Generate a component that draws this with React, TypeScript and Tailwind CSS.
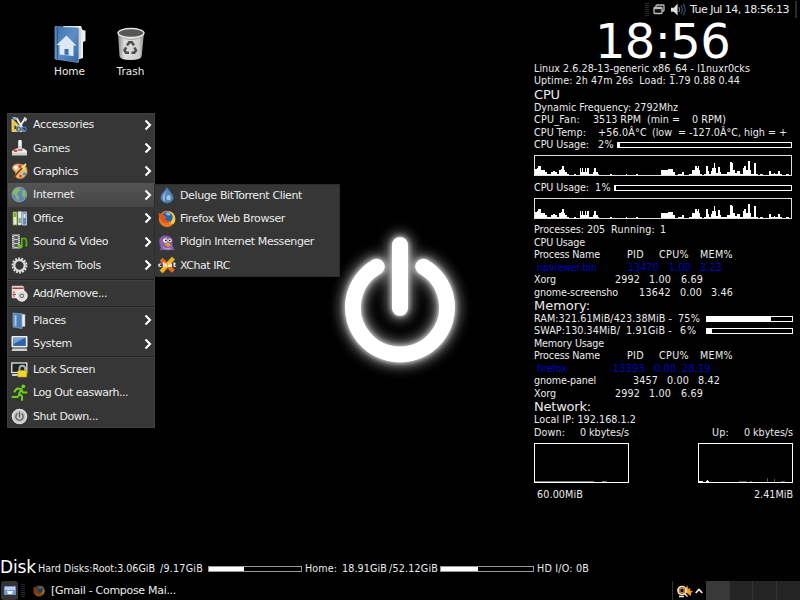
import { useLayoutEffect, useRef, useState, type ReactNode } from "react";

/* Text that spreads its letters evenly to fill the width given by its class. */
function Fit({ c, children }: { c: string; children: string }) {
  const outer = useRef<HTMLSpanElement>(null);
  const inner = useRef<HTMLSpanElement>(null);
  const [gap, setGap] = useState(0);
  useLayoutEffect(() => {
    if (!outer.current || !inner.current) return;
    const free = outer.current.getBoundingClientRect().width - inner.current.getBoundingClientRect().width;
    setGap(free / children.length);
  }, [children]);
  return (
    <span ref={outer} className={`block shrink-0 whitespace-pre ${c}`}>
      <span ref={inner} className="inline-block" style={{ letterSpacing: gap }}>
        {children}
      </span>
    </span>
  );
}

function Row({ children, c = "" }: { children: ReactNode; c?: string }) {
  return <div className={`flex h-[12.5px] items-center ${c}`}>{children}</div>;
}

function Title({ children, c }: { children: string; c: string }) {
  return (
    <div className="flex h-[13.75px] items-center text-[13px]">
      <Fit c={c}>{children}</Fit>
    </div>
  );
}

function Bar({ c, fill }: { c: string; fill: string }) {
  return (
    <div className={`h-[6px] shrink-0 border ${c}`}>
      <div className={`h-full bg-white ${fill}`} />
    </div>
  );
}

/* CPU load history: [x, height] in thirds of a pixel. */
const load: [number, number][] = [
  [28, 18], [36, 22], [41, 28], [47, 28], [50, 16], [54, 14], [62, 10], [68, 4], [78, 10], [84, 12], [90, 8], [96, 3],
  [104, 16], [109, 18], [113, 26], [117, 16], [122, 8], [127, 3], [132, 1], [147, 3], [153, 1], [165, 20], [169, 8], [172, 20],
  [175, 10], [181, 20], [184, 8], [188, 20], [193, 4], [204, 9], [209, 20], [214, 10], [219, 4], [222, 1], [255, 3], [262, 0],
  [304, 3], [307, 0], [335, 2], [340, 0], [385, 1], [410, 15], [430, 18], [441, 17], [446, 8], [450, 1], [460, 3], [472, 9], [477, 1],
  [492, 3], [503, 14], [510, 26], [516, 22], [520, 26], [523, 14], [527, 4], [531, 1], [537, 4], [545, 26], [549, 12], [552, 4],
  [558, 12], [562, 22], [567, 36], [570, 22], [574, 6], [581, 24], [585, 8], [589, 2], [601, 4], [608, 8], [616, 40], [622, 36],
  [626, 14], [630, 6], [636, 12], [645, 4], [654, 20], [659, 26], [663, 14], [671, 42], [675, 16], [679, 2], [689, 36], [694, 4],
  [699, 1], [707, 4], [715, 1], [733, 12], [738, 3], [747, 6], [752, 3], [759, 12], [765, 3], [772, 1], [785, 4], [792, 1],
];

function LoadGraph() {
  const d = load.map(([x, h]) => `H${Math.round((x - 28) / 3)}V${20 - Math.round(h / 3)}`).join("");
  return (
    <div className="h-[30px] pt-[4px]">
      <svg className="block h-[21px] w-[258px]" viewBox="0 0 258 21">
        <path d={`M0 21${d}H258V21z`} fill="#fff" />
        <rect x=".5" y=".5" width="257" height="20" fill="none" stroke="#e0e0e0" />
      </svg>
    </div>
  );
}

function Conky() {
  return (
    <section className="w-[266px] shrink-0 text-[9.6px] leading-none text-[#ebebeb]">
      <div className="flex h-[43.5px] items-center pl-[61px] text-[48px] leading-[40px] text-white">
        <Fit c="w-[135px]">18:56</Fit>
      </div>
      <Row><Fit c="w-[216px]">Linux 2.6.28-13-generic x86_64 - l1nuxr0cks</Fit></Row>
      <Row><Fit c="w-[206px]">Uptime: 2h 47m 26s  Load: 1.79 0.88 0.44</Fit></Row>
      <Title c="w-[26px]">CPU</Title>
      <Row><Fit c="w-[144px]">Dynamic Frequency: 2792Mhz</Fit></Row>
      <Row>
        <Fit c="w-[46px]">CPU_Fan:</Fit><Fit c="ml-[13px] w-[48px]">3513 RPM</Fit>
        <Fit c="ml-[6px] w-[33px]">(min =</Fit><Fit c="ml-[12px] w-[34px]">0 RPM)</Fit>
      </Row>
      <Row>
        <Fit c="w-[52px]">CPU Temp:</Fit><Fit c="ml-[12px] w-[49px]">+56.0Â°C</Fit>
        <Fit c="ml-[5px] w-[20px]">(low</Fit><Fit c="ml-[6px] w-[109px]">= -127.0Â°C, high = +</Fit>
      </Row>
      <Row><Fit c="w-[55px]">CPU Usage:</Fit><Fit c="ml-[9px] w-[16px]">2%</Fit><Bar c="ml-[3px] w-[175px] border-white" fill="w-[2px]" /></Row>
      <LoadGraph />
      <Row><Fit c="w-[55px]">CPU Usage:</Fit><Fit c="ml-[6px] w-[16px]">1%</Fit><Bar c="ml-[3px] w-[178px] border-white" fill="w-[1px]" /></Row>
      <LoadGraph />
      <Row><Fit c="w-[71px]">Processes: 205</Fit><Fit c="ml-[6px] w-[44px]">Running:</Fit><Fit c="ml-[5px] w-[6px]">1</Fit></Row>
      <Row><Fit c="w-[51px]">CPU Usage</Fit></Row>
      <Heads />
      <Row c="text-[#0000c8]">
        <Fit c="ml-[3px] w-[60px]">npviewer.bin</Fit><Fit c="ml-[31px] w-[31px]">13470</Fit>
        <Fit c="ml-[10px] w-[22px]">1.00</Fit><Fit c="ml-[9px] w-[22px]">3.23</Fit>
      </Row>
      <Xorg />
      <Row>
        <Fit c="w-[84px]">gnome-screensho</Fit><Fit c="ml-[21px] w-[32px]">13642</Fit>
        <Fit c="ml-[9px] w-[22px]">0.00</Fit><Fit c="ml-[9px] w-[22px]">3.46</Fit>
      </Row>
      <Title c="w-[56px]">Memory:</Title>
      <Row>
        <Fit c="w-[138px]">RAM:321.61MiB/423.38MiB -</Fit><Fit c="ml-[6px] w-[22px]">75%</Fit>
        <Bar c="ml-[6px] w-[87px] border-white" fill="w-[64px]" />
      </Row>
      <Row>
        <Fit c="w-[86px]">SWAP:130.34MiB/</Fit><Fit c="ml-[6px] w-[46px]">1.91GiB -</Fit>
        <Fit c="ml-[8px] w-[17px]">6%</Fit><Bar c="ml-[9px] w-[87px] border-white" fill="w-[5px]" />
      </Row>
      <Row><Fit c="w-[70px]">Memory Usage</Fit></Row>
      <Heads />
      <Row c="text-[#0000c8]">
        <Fit c="ml-[3px] w-[30px]">firefox</Fit><Fit c="ml-[46px] w-[32px]">13393</Fit>
        <Fit c="ml-[9px] w-[22px]">0.00</Fit><Fit c="ml-[6px] w-[29px]">28.19</Fit>
      </Row>
      <Row>
        <Fit c="w-[62px]">gnome-panel</Fit><Fit c="ml-[37px] w-[25px]">3457</Fit>
        <Fit c="ml-[9px] w-[22px]">0.00</Fit><Fit c="ml-[9px] w-[22px]">8.42</Fit>
      </Row>
      <Xorg />
      <Title c="w-[57px]">Network:</Title>
      <Row><Fit c="w-[102px]">Local IP: 192.168.1.2</Fit></Row>
      <Row>
        <Fit c="w-[31px]">Down:</Fit><Fit c="ml-[15px] w-[49px]">0 kbytes/s</Fit>
        <Fit c="ml-[83px] w-[17px]">Up:</Fit><Fit c="ml-[15px] w-[49px]">0 kbytes/s</Fit>
      </Row>
      <div className="flex h-[49.5px] gap-[69px] pt-[4px]">
        <svg className="block h-[41px] w-[95px]" viewBox="0 0 95 41">
          <rect x=".5" y=".5" width="94" height="39" fill="none" stroke="#fff" />
          <path d="M1 38.500H60M68 38.500h5" stroke="#777" fill="none" />
        </svg>
        <svg className="block h-[41px] w-[95px]" viewBox="0 0 95 41">
          <rect x=".5" y=".5" width="94" height="39" fill="none" stroke="#fff" />
          <path d="M1 38.500h4M8 38.500h3M9.500 37v2" stroke="#fff" fill="none" />
          <path d="M41 38.500h8M52 38.500h2M69.500 35v4M76.500 36v3M83 38.500h4" stroke="#555" fill="none" />
        </svg>
      </div>
      <Row><Fit c="ml-[3px] w-[46px]">60.00MiB</Fit><Fit c="ml-[171px] w-[39px]">2.41MiB</Fit></Row>
    </section>
  );
}

function Heads() {
  return (
    <Row>
      <Fit c="w-[66px]">Process Name</Fit><Fit c="ml-[27px] w-[17px]">PID</Fit>
      <Fit c="ml-[15px] w-[30px]">CPU%</Fit><Fit c="ml-[11px] w-[33px]">MEM%</Fit>
    </Row>
  );
}

function Xorg() {
  return (
    <Row>
      <Fit c="w-[22px]">Xorg</Fit><Fit c="ml-[59px] w-[25px]">2992</Fit>
      <Fit c="ml-[9px] w-[22px]">1.00</Fit><Fit c="ml-[10px] w-[22px]">6.69</Fit>
    </Row>
  );
}

function Icon({ children, c = "size-[17px]" }: { children: ReactNode; c?: string }) {
  return <svg viewBox="0 0 17 17" className={`block shrink-0 ${c}`} fill="none">{children}</svg>;
}

const firefoxArt = (
  <>
    <circle cx="8.500" cy="8.500" r="7.800" fill="#e8791d" /><path d="M11 1.200c5.500 2 7 8 3.500 12l-4-1z" fill="#f6cb3b" />
    <circle cx="8.700" cy="6.900" r="5.200" fill="#2864a8" /><path d="M7 3c2-1.500 4-.5 5.500.5l-2 2-2-.5z" fill="#79b9e5" />
    <path d="M.8 2.500L2.500 4 4 3.200 5 5l3 1.500-1.500 2 2 2 3-.5c-1 3-6 3.500-8 .5S.3 6 .8 2.500z" fill="#e0561c" />
  </>
);

const icons = {
  accessories: (
    <Icon>
      <path d="M1 3v12.500h13z" fill="#e8c840" stroke="#f5e48a" strokeWidth=".8" /><path d="M3.500 9v4H7.500z" fill="#383838" />
      <path d="M5.500 2l6 10M14.500 1.500L8 12" stroke="#e6ebf0" strokeWidth="2" />
      <circle cx="13" cy="13" r="2.100" stroke="#3f74b8" strokeWidth="1.500" /><circle cx="7.500" cy="13" r="1.900" stroke="#3f74b8" strokeWidth="1.500" />
      <path d="M1 1h4l1 2.500-3 .5z" fill="#87a9cf" /><path d="M13 4l3-2v2l-2 2z" fill="#c7ced6" />
    </Icon>
  ),
  games: (
    <Icon>
      <path d="M9 1.500v8" stroke="#f2f2f2" strokeWidth="3.600" strokeLinecap="round" /><path d="M7.800 6h3v4h-3z" fill="#c9c9c7" />
      <path d="M2 10.500l3-2h8l3 2.500v4H1v-4z" fill="#f1f1ef" /><path d="M1 12.500h15V15.500H1z" fill="#cfcfcf" />
      <ellipse cx="4.500" cy="10.800" rx="2" ry="1.200" fill="#d43a3a" /><path d="M7 10h4.500" stroke="#a22" strokeWidth="1.200" />
    </Icon>
  ),
  graphics: (
    <Icon>
      <path d="M8 1C3.500 .5 1 3 1.500 5.500S5 8 4.500 11 6 16 10 15.500s7-4.500 6-9S12 1.500 8 1z" fill="#e8bc78" stroke="#b5803a" strokeWidth=".7" />
      <circle cx="5" cy="4.500" r="1.700" fill="#fff" /><circle cx="9" cy="3.500" r="1.400" fill="#c33" /><circle cx="13.500" cy="6" r="1.500" fill="#e8dc3b" />
      <circle cx="13.500" cy="11" r="1.600" fill="#4c8cc8" /><circle cx="9.500" cy="13" r="1.600" fill="#d84a3a" />
      <path d="M2 15L12 4" stroke="#7c3b13" strokeWidth="1.700" /><path d="M11 5l4-4" stroke="#f6d69c" strokeWidth="1.800" />
    </Icon>
  ),
  internet: (
    <Icon>
      <circle cx="8.300" cy="8.500" r="7.400" fill="#5c8ab8" stroke="#9ab4c9" strokeWidth=".6" />
      <path d="M3 4l3-2 3 .5.500 2L7 6l-1 3 2 2-1 4-2-3-1-3-2.500-1zM11 4l3 1 1 4-2 3-2-3 .5-2z" fill="#8fb85a" />
    </Icon>
  ),
  office: (
    <Icon>
      <path d="M2 2h4v13H2z" fill="#e3edcf" stroke="#6b9e30" strokeWidth=".8" /><path d="M2.500 3h3v4h-3z" fill="#79b531" />
      <path d="M7 1.500h3.500V15H7z" fill="#e9eef4" stroke="#aaa" strokeWidth=".6" /><path d="M7.500 8h2.500v5H7.500z" fill="#91ad78" />
      <path d="M11.500 2h4v13h-4z" fill="#5e8dc9" stroke="#c8d9ed" strokeWidth=".8" /><path d="M12.500 4h2v4h-2z" fill="#dfeaf6" />
    </Icon>
  ),
  sound: (
    <Icon>
      <path d="M1 1.500h8v14H1z" fill="#c9cbc8" /><path d="M3.200 3h3.800v3H3.200zM3.200 7h3.800v3H3.200zM3.200 11h3.800v3H3.200z" fill="#59605b" />
      <path d="M2 2v13M8.200 2v13" stroke="#444" strokeDasharray="1 1" />
      <path d="M10.800 13V5.500h3.200c1.500 1 1.800 2 1.500 7h-1.500" stroke="#55b511" strokeWidth="1.700" /><ellipse cx="9.300" cy="13.500" rx="2.400" ry="1.900" fill="#62c018" />
    </Icon>
  ),
  tools: (
    <Icon>
      <circle cx="8.500" cy="8.500" r="7" stroke="#ddd" strokeWidth="2" strokeDasharray="1.900 1.240" />
      <circle cx="8.500" cy="8.500" r="5.300" stroke="#ddd9d6" strokeWidth="2.300" />
    </Icon>
  ),
  add: (
    <Icon>
      <path d="M1 1h11l1 2v10H1z" fill="#e8e4e1" stroke="#bbb" strokeWidth=".6" /><path d="M1.500 2.500h11v1.500h-11z" fill="#b73636" />
      <path d="M3 6v6M1.500 9.500h3.500" stroke="#c44" />
      <circle cx="10.800" cy="10.800" r="5.400" fill="#dedede" stroke="#f5f5f5" /><circle cx="10.800" cy="10.800" r="2.400" fill="#777" /><circle cx="10.800" cy="10.800" r="1.100" fill="#eee" />
    </Icon>
  ),
  places: (
    <Icon>
      <path d="M9 2l5 .5v12H9z" fill="#eee" stroke="#aaa" strokeWidth=".5" /><path d="M2 1l9 1V16.500L2 15z" fill="#4d7fb5" stroke="#8ab0d8" strokeWidth=".7" />
      <path d="M4.500 3v11" stroke="#a9c6e4" strokeWidth="2" />
    </Icon>
  ),
  system: (
    <Icon>
      <rect x=".5" y="1" width="16" height="11.500" rx="1" fill="#eceeea" /><rect x="2.200" y="2.600" width="12.600" height="8.300" fill="#2e62a6" />
      <path d="M2.500 3h11L2.500 9z" fill="#7aa3d4" /><path d="M1.500 13.500h14l1 2.500H.5z" fill="#d2d4d0" />
    </Icon>
  ),
  lock: (
    <Icon>
      <rect x=".8" y="2" width="15" height="9.500" fill="#1c2420" stroke="#e1e3e0" strokeWidth="1.300" /><path d="M1 14h6" stroke="#ccc" strokeWidth="2" />
      <path d="M8.500 10V7.500a2.800 2.800 0 015.600 0V10" stroke="#a9b2be" strokeWidth="1.900" /><rect x="6.800" y="9.500" width="9" height="6.500" rx=".6" fill="#f1d72c" stroke="#c1a000" strokeWidth=".6" />
    </Icon>
  ),
  logout: (
    <Icon>
      <circle cx="12.300" cy="2.300" r="1.900" fill="#6dd017" />
      <path d="M3.500 7.500l2.500-3 4.500.5-2.500 5 3 2v4M8.500 10.500l-2 2.500H1.500M10.500 5.500l1.500 3h3.500" stroke="#6dd017" strokeWidth="2" strokeLinejoin="round" strokeLinecap="round" />
    </Icon>
  ),
  shutdown: (
    <Icon>
      <circle cx="8.500" cy="8.500" r="7.800" fill="#d8d8d6" /><circle cx="8.500" cy="8.500" r="6" fill="#c3c4c1" />
      <path d="M6 5.800a3.700 3.700 0 105 0M8.500 4.200v4.600" stroke="#555" strokeWidth="1.200" strokeLinecap="round" />
    </Icon>
  ),
  deluge: (
    <Icon c="size-[18px]">
      <path d="M8.500 .8C7.500 4 2.500 7 2.500 11a6 5.200 0 0012 0c0-4-5-7-6-10.200z" fill="#5784b5" stroke="#2f5688" strokeWidth=".8" />
      <path d="M7.500 5c-2 3-3 4-3 6s1 3 2 3.500C6 11 6.500 8 7.500 5z" fill="#9dbbdb" /><ellipse cx="10" cy="11" rx="2" ry="2.500" fill="#a5c4e6" />
    </Icon>
  ),
  firefox: <Icon c="size-[18px]">{firefoxArt}</Icon>,
  pidgin: (
    <Icon c="size-[18px]">
      <path d="M2 16c1-2 0-4-.5-6C0 5 4 2 8 2.500s6.500 3 5.500 7c-.4 2 1 4 2 6.500z" fill="#8a62a8" stroke="#6b4189" strokeWidth=".5" />
      <circle cx="7" cy="7" r="2.100" fill="#fff" /><circle cx="11.200" cy="7" r="1.700" fill="#fff" /><circle cx="7.400" cy="7" r=".9" fill="#111" /><circle cx="11" cy="7" r=".9" fill="#111" />
      <path d="M6.500 10.500L9.500 9l3 2.500-3 1.700z" fill="#f39a2b" /><path d="M5 13.500q1 1.500 3 1.500h4" stroke="#c6a9d4" />
    </Icon>
  ),
  xchat: (
    <Icon c="size-[18px]">
      <path d="M3 3l11.500 11.500" stroke="#e8691c" strokeWidth="4" /><path d="M14.500 2L3 15" stroke="#f7b51c" strokeWidth="4" />
      <text x="0" y="10.800" fontSize="6" fontWeight="bold" fill="#fff" textLength="17">chat</text>
    </Icon>
  ),
};

function Item({ icon, text, c, arrow, active }: { icon: keyof typeof icons; text: string; c: string; arrow?: boolean; active?: boolean }) {
  return (
    <div className={`flex h-[23.4px] items-center pr-[3px] pl-[4px] ${active ? "bg-linear-to-b from-[#545454] to-[#454545]" : ""}`}>
      <div className="w-[22px] shrink-0">{icons[icon]}</div>
      <Fit c={c}>{text}</Fit>
      {arrow && (
        <svg viewBox="0 0 8 12" className="ml-auto h-[12px] w-[8px]" fill="none" stroke="#fff" strokeWidth="2.100">
          <path d="M1.500 1.500L6 6l-4.500 4.500" />
        </svg>
      )}
    </div>
  );
}

function Separator({ c }: { c: string }) {
  return <div className={`flex items-center ${c}`}><div className="h-px w-full bg-[#222] shadow-[0_1px_0_#404040]" /></div>;
}

function Menu() {
  return (
    <nav className="relative mt-[34px] ml-[7px] w-[148px] bg-[#363636] text-[11px] leading-none text-[#ebebeb] outline -outline-offset-1 outline-[#3f3f3f]">
      <Item icon="accessories" text="Accessories" c="w-[61px]" arrow />
      <Item icon="games" text="Games" c="w-[37px]" arrow />
      <Item icon="graphics" text="Graphics" c="w-[45px]" arrow />
      <Item icon="internet" text="Internet" c="w-[41px]" arrow active />
      <Item icon="office" text="Office" c="w-[30px]" arrow />
      <Item icon="sound" text="Sound &amp; Video" c="w-[75px]" arrow />
      <Item icon="tools" text="System Tools" c="w-[68px]" arrow />
      <Separator c="h-[5px]" />
      <Item icon="add" text="Add/Remove..." c="w-[74px]" />
      <Separator c="h-[3.4px]" />
      <Item icon="places" text="Places" c="w-[33px]" arrow />
      <Item icon="system" text="System" c="w-[39px]" arrow />
      <Separator c="h-[2.400px]" />
      <Item icon="lock" text="Lock Screen" c="w-[62px]" />
      <Item icon="logout" text="Log Out easwarh..." c="w-[95px]" />
      <Item icon="shutdown" text="Shut Down..." c="w-[65px]" />
      <div className="absolute top-[70.500px] left-[147px] w-[186px] bg-[#363636] outline -outline-offset-1 outline-[#2c2c2c]">
        <Item icon="deluge" text="Deluge BitTorrent Client" c="w-[122px]" />
        <Item icon="firefox" text="Firefox Web Browser" c="w-[105px]" />
        <Item icon="pidgin" text="Pidgin Internet Messenger" c="w-[134px]" />
        <Item icon="xchat" text="XChat IRC" c="w-[50px]" />
      </div>
    </nav>
  );
}

function HomeIcon() {
  return (
    <svg viewBox="0 0 34 38" className="h-[38px] w-[34px]" fill="none">
      <defs>
        <linearGradient id="folder" x1="0" y1="0" x2="1" y2="1"><stop stopColor="#3b6fa8" /><stop offset=".5" stopColor="#5c8fc6" /><stop offset="1" stopColor="#3566a0" /></linearGradient>
      </defs>
      <path d="M10 1h18l1.500 4 3 .5V16l-2.500 1v16l-6 2z" fill="#ececec" />
      <path d="M27 3v30" stroke="#bbb" />
      <path d="M2 1.500L25.500 3v34.500L2 34z" fill="url(#folder)" stroke="#6d9bce" strokeWidth=".8" />
      <path d="M4.500 2v32" stroke="#2d5c94" />
      <path d="M13.500 10.500L3.500 20h3v9.500L20.500 31V20.500l3 .3z" fill="#dde8f6" />
      <path d="M11.500 24h4v6l-4-.5z" fill="#3f6ea6" />
    </svg>
  );
}

function TrashIcon() {
  return (
    <svg viewBox="0 0 30 38" className="h-[38px] w-[30px]" fill="none">
      <defs>
        <linearGradient id="bin"><stop stopColor="#8b8b89" /><stop offset=".25" stopColor="#dededc" /><stop offset=".8" stopColor="#cfcfcd" /><stop offset="1" stopColor="#8c8c8a" /></linearGradient>
      </defs>
      <path d="M2 8l1.500 23q.3 4 11 4t11.200-4L28 8z" fill="url(#bin)" />
      <path d="M4 12q11 5 22 0" stroke="#aaa" />
      <ellipse cx="15" cy="8" rx="13" ry="4.500" fill="#555753" stroke="#e4e4e2" strokeWidth="1.400" />
      <g stroke="#4c4e4b" strokeWidth="2.500">
        <path d="M11 20.500l2.300-3.300h2.500l2.200 3.200" /><path d="M18.500 22.500l1.500 3-1.700 2.300H15.500" /><path d="M13 27.800h-3l-1.500-2.500 1.700-3" />
      </g>
    </svg>
  );
}

function PowerLogo() {
  return (
    <svg viewBox="0 0 180 180" className="absolute top-[217px] left-[310px] size-[180px]" fill="none">
      <defs>
        <filter id="glow" x="-50%" y="-50%" width="200%" height="200%"><feGaussianBlur stdDeviation="7" /></filter>
        <filter id="halo" x="-30%" y="-30%" width="160%" height="160%"><feGaussianBlur stdDeviation="2.500" /></filter>
        <path id="power" d="M66.700 49.700a47 47 0 1046.600 0M90 28v63" />
      </defs>
      <use href="#power" stroke="#fff" strokeWidth="21" strokeLinecap="round" filter="url(#glow)" opacity=".65" />
      <use href="#power" stroke="#fff" strokeWidth="17" strokeLinecap="round" filter="url(#halo)" opacity=".7" />
      <use href="#power" stroke="#fff" strokeWidth="16" strokeLinecap="round" />
    </svg>
  );
}

function Grip() {
  return (
    <svg viewBox="0 0 4 14" className="h-[14px] w-[4px]"><path d="M1 0v14M3 0v14" stroke="#555" strokeDasharray="1 1" /></svg>
  );
}

function TopPanel() {
  return (
    <header className="flex h-[19px] items-center justify-end pr-[3px] text-[11px] leading-none text-[#ebebeb]">
      <Grip />
      <svg viewBox="0 0 12 12" className="ml-[4px] size-[12px]" fill="#111" stroke="#bbb" strokeWidth="1.300">
        <rect x="3" y="1" width="8" height="6" rx=".7" /><rect x="1" y="3.500" width="8" height="6" rx=".7" /><path d="M1 4.500h8" />
      </svg>
      <svg viewBox="0 0 18 16" className="ml-[5px] h-[15px] w-[17px]" fill="none">
        <path d="M1 6h3l4-4.500v13L4 10.500H1z" fill="#ddd" /><path d="M9.500 5.500q1.500 2.500 0 5" stroke="#aaa" /><path d="M11.500 3.500q3 4.500 0 9M14 2q4 6 0 12" stroke="#34597f" strokeWidth="1.200" />
      </svg>
      <Fit c="ml-[3px] w-[99px]">Tue Jul 14, 18:56:13</Fit>
      <div className="ml-[6px] h-[17px] w-[2px] bg-[#2c2c2c]" />
    </header>
  );
}

function DiskRow() {
  return (
    <div className="flex h-[25px] items-center pt-[1px] text-[9.6px] leading-none text-[#ebebeb]">
      <div className="mb-[4px] text-[17px] text-white"><Fit c="w-[36px]">Disk</Fit></div>
      <Fit c="ml-[2px] w-[117px]">Hard Disks:Root:3.06GiB</Fit>
      <Fit c="ml-[5px] w-[43px]">/9.17GiB</Fit>
      <Bar c="ml-[5px] w-[94px] border-[#999]" fill="w-[35px]" />
      <Fit c="ml-[3px] w-[32px]">Home:</Fit>
      <Fit c="ml-[5px] w-[45px]">18.91GiB</Fit>
      <Fit c="ml-[2px] w-[49px]">/52.12GiB</Fit>
      <Bar c="ml-[2px] w-[94px] border-[#999]" fill="w-[37px]" />
      <Fit c="ml-[3px] w-[52px]">HD I/O: 0B</Fit>
    </div>
  );
}

function Taskbar() {
  return (
    <footer className="flex h-[19px] items-center text-[11px] leading-none text-[#ebebeb]">
      <div className="ml-[1px] flex h-[19px] w-[17px] items-center justify-center rounded-[3px] bg-[#333]">
        <svg viewBox="0 0 12 10" className="h-[10px] w-[12px]"><rect width="12" height="9" rx="1" fill="#7298cc" /><path d="M1 1h10v3H1z" fill="#b8d0ee" /><path d="M3 5h6l-1 3H4z" fill="#f4f4f4" /></svg>
      </div>
      <div className="ml-[3px]"><Grip /></div>
      <div className="ml-[8px] opacity-60"><Icon c="size-[12px]">{firefoxArt}</Icon></div>
      <Fit c="ml-[6px] w-[125px]">[Gmail - Compose Mai...</Fit>
      <div className="ml-auto h-full w-px bg-[#333]" />
      <svg viewBox="0 0 18 14" className="ml-[3px] h-[14px] w-[18px]" fill="none">
        <path d="M9 8l2-7 1.500 4L14 4l.5 3H17l-2 2v3l-3-2z" fill="#f39a1f" />
        <circle cx="6" cy="6.500" r="4" stroke="#efe6d4" strokeWidth="1.700" /><circle cx="6" cy="6.500" r="2.300" stroke="#e88a1a" strokeWidth="1.300" />
        <path d="M8.500 9.500l3 3M3 12.500h5" stroke="#eee" strokeWidth="1.400" />
      </svg>
      <svg viewBox="0 0 8 6" className="ml-[1px] h-[6px] w-[8px]" fill="none" stroke="#eee" strokeWidth="1.700"><path d="M.7 5L4 1.500 7.300 5" /></svg>
      <div className="ml-[3px] grid h-full w-[94px] grid-cols-4 divide-x divide-[#333] bg-[#242424]">
        <div className="bg-[#393939]" /><div /><div /><div />
      </div>
    </footer>
  );
}

export default function App() {
  return (
    <div className="relative flex h-[600px] w-[800px] flex-col overflow-hidden bg-black font-['DejaVu_Sans',sans-serif]">
      <PowerLogo />
      <TopPanel />
      <main className="relative flex h-[537px] justify-between">
        <div>
          <div className="flex h-[60px] pt-[6px] pl-[39px] text-[10.500px] leading-none text-[#ebebeb]">
            <div className="flex w-[61px] flex-col items-center gap-[3px]"><HomeIcon /><Fit c="w-[31px]">Home</Fit></div>
            <div className="flex w-[61px] flex-col items-center gap-[3px]"><TrashIcon /><Fit c="w-[28px]">Trash</Fit></div>
          </div>
          <Menu />
        </div>
        <Conky />
      </main>
      <DiskRow />
      <Taskbar />
    </div>
  );
}
